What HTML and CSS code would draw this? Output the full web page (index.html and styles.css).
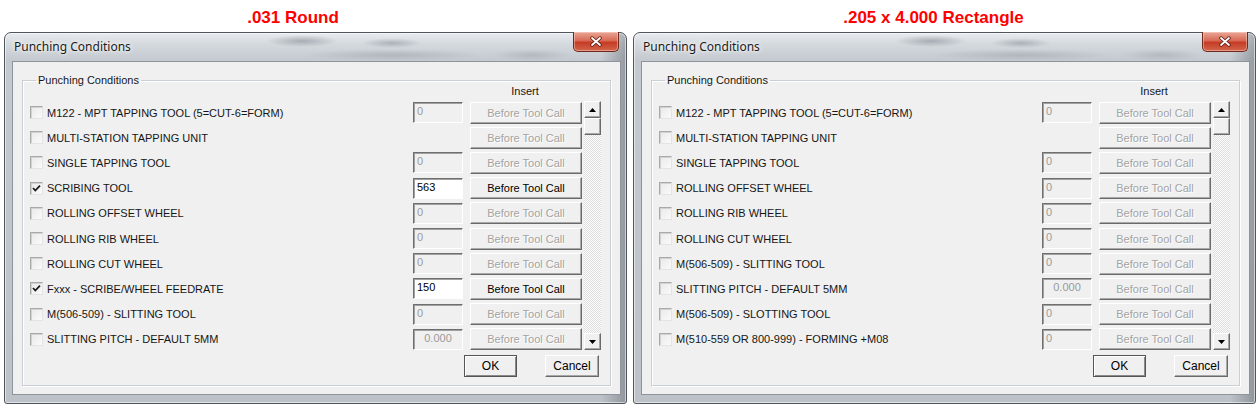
FILE: index.html
```html
<!DOCTYPE html>
<html lang="en">
  <head>
    <meta charset="utf-8" />
    <title>Punching Conditions</title>
    <link rel="stylesheet" href="styles.css">
  </head>
  <body>
    <main class="screens">

      <section class="panel panel-round">
        <h2 class="caption">.031 Round</h2>
        <div class="window">
          <div class="titlebar">
            <span class="title">Punching Conditions</span>
            <span class="close">
              <svg width="14" height="11" viewBox="0 0 14 11"><path d="M3 2 L11 9 M11 2 L3 9" stroke="#5a1a10" stroke-width="3.4" stroke-linecap="round"/><path d="M3 2 L11 9 M11 2 L3 9" stroke="#fff" stroke-width="1.8" stroke-linecap="round"/></svg>
            </span>
          </div>
          <div class="client">
            <fieldset class="group">
              <legend>Punching Conditions</legend>
              <div class="insert-head"><span>Insert</span></div>
              <div class="list">
                <div class="rows">
                  <div class="row">
                    <label class="opt"><span class="box"></span>M122 - MPT TAPPING TOOL (5=CUT-6=FORM)</label>
                    <span class="field">0</span><span class="btn">Before Tool Call</span>
                  </div>
                  <div class="row">
                    <label class="opt"><span class="box"></span>MULTI-STATION TAPPING UNIT</label>
                    <span class="btn">Before Tool Call</span>
                  </div>
                  <div class="row">
                    <label class="opt"><span class="box"></span>SINGLE TAPPING TOOL</label>
                    <span class="field">0</span><span class="btn">Before Tool Call</span>
                  </div>
                  <div class="row">
                    <label class="opt"><span class="box checked"><svg width="11" height="11" viewBox="0 0 11 11"><path d="M2 5 L4.3 7.5 L9 2.6" fill="none" stroke="#1a1a1a" stroke-width="1.8"/></svg></span>SCRIBING TOOL</label>
                    <span class="field on">563</span><span class="btn on">Before Tool Call</span>
                  </div>
                  <div class="row">
                    <label class="opt"><span class="box"></span>ROLLING OFFSET WHEEL</label>
                    <span class="field">0</span><span class="btn">Before Tool Call</span>
                  </div>
                  <div class="row">
                    <label class="opt"><span class="box"></span>ROLLING RIB WHEEL</label>
                    <span class="field">0</span><span class="btn">Before Tool Call</span>
                  </div>
                  <div class="row">
                    <label class="opt"><span class="box"></span>ROLLING CUT WHEEL</label>
                    <span class="field">0</span><span class="btn">Before Tool Call</span>
                  </div>
                  <div class="row">
                    <label class="opt"><span class="box checked"><svg width="11" height="11" viewBox="0 0 11 11"><path d="M2 5 L4.3 7.5 L9 2.6" fill="none" stroke="#1a1a1a" stroke-width="1.8"/></svg></span>Fxxx - SCRIBE/WHEEL FEEDRATE</label>
                    <span class="field on">150</span><span class="btn on">Before Tool Call</span>
                  </div>
                  <div class="row">
                    <label class="opt"><span class="box"></span>M(506-509) - SLITTING TOOL</label>
                    <span class="field">0</span><span class="btn">Before Tool Call</span>
                  </div>
                  <div class="row">
                    <label class="opt"><span class="box"></span>SLITTING PITCH - DEFAULT 5MM</label>
                    <span class="field num">0.000</span><span class="btn">Before Tool Call</span>
                  </div>
                </div>
                <div class="scrollbar">
                  <span class="arrow"><svg width="7" height="4" viewBox="0 0 7 4"><path d="M0 4 L3.5 0 L7 4 Z" fill="#000"/></svg></span>
                  <span class="thumb"></span>
                  <span class="track"></span>
                  <span class="arrow"><svg width="7" height="4" viewBox="0 0 7 4"><path d="M0 0 L7 0 L3.5 4 Z" fill="#000"/></svg></span>
                </div>
              </div>
              <div class="actions">
                <button class="push default">OK</button>
                <button class="push">Cancel</button>
              </div>
            </fieldset>
          </div>
        </div>
      </section>

      <section class="panel panel-rect">
        <h2 class="caption">.205 x 4.000 Rectangle</h2>
        <div class="window">
          <div class="titlebar">
            <span class="title">Punching Conditions</span>
            <span class="close">
              <svg width="14" height="11" viewBox="0 0 14 11"><path d="M3 2 L11 9 M11 2 L3 9" stroke="#5a1a10" stroke-width="3.4" stroke-linecap="round"/><path d="M3 2 L11 9 M11 2 L3 9" stroke="#fff" stroke-width="1.8" stroke-linecap="round"/></svg>
            </span>
          </div>
          <div class="client">
            <fieldset class="group">
              <legend>Punching Conditions</legend>
              <div class="insert-head"><span>Insert</span></div>
              <div class="list">
                <div class="rows">
                  <div class="row">
                    <label class="opt"><span class="box"></span>M122 - MPT TAPPING TOOL (5=CUT-6=FORM)</label>
                    <span class="field">0</span><span class="btn">Before Tool Call</span>
                  </div>
                  <div class="row">
                    <label class="opt"><span class="box"></span>MULTI-STATION TAPPING UNIT</label>
                    <span class="btn">Before Tool Call</span>
                  </div>
                  <div class="row">
                    <label class="opt"><span class="box"></span>SINGLE TAPPING TOOL</label>
                    <span class="field">0</span><span class="btn">Before Tool Call</span>
                  </div>
                  <div class="row">
                    <label class="opt"><span class="box"></span>ROLLING OFFSET WHEEL</label>
                    <span class="field">0</span><span class="btn">Before Tool Call</span>
                  </div>
                  <div class="row">
                    <label class="opt"><span class="box"></span>ROLLING RIB WHEEL</label>
                    <span class="field">0</span><span class="btn">Before Tool Call</span>
                  </div>
                  <div class="row">
                    <label class="opt"><span class="box"></span>ROLLING CUT WHEEL</label>
                    <span class="field">0</span><span class="btn">Before Tool Call</span>
                  </div>
                  <div class="row">
                    <label class="opt"><span class="box"></span>M(506-509) - SLITTING TOOL</label>
                    <span class="field">0</span><span class="btn">Before Tool Call</span>
                  </div>
                  <div class="row">
                    <label class="opt"><span class="box"></span>SLITTING PITCH - DEFAULT 5MM</label>
                    <span class="field num">0.000</span><span class="btn">Before Tool Call</span>
                  </div>
                  <div class="row">
                    <label class="opt"><span class="box"></span>M(506-509) - SLOTTING TOOL</label>
                    <span class="field">0</span><span class="btn">Before Tool Call</span>
                  </div>
                  <div class="row">
                    <label class="opt"><span class="box"></span>M(510-559 OR 800-999) - FORMING +M08</label>
                    <span class="field">0</span><span class="btn">Before Tool Call</span>
                  </div>
                </div>
                <div class="scrollbar">
                  <span class="arrow"><svg width="7" height="4" viewBox="0 0 7 4"><path d="M0 4 L3.5 0 L7 4 Z" fill="#000"/></svg></span>
                  <span class="thumb"></span>
                  <span class="track"></span>
                  <span class="arrow"><svg width="7" height="4" viewBox="0 0 7 4"><path d="M0 0 L7 0 L3.5 4 Z" fill="#000"/></svg></span>
                </div>
              </div>
              <div class="actions">
                <button class="push default">OK</button>
                <button class="push">Cancel</button>
              </div>
            </fieldset>
          </div>
        </div>
      </section>

    </main>
  </body>
</html>
```

FILE: styles.css
```css
* {
  box-sizing: border-box;
}

body {
  margin: 0;
  background: #fff;
  font-family: "Liberation Sans", Arial, sans-serif;
  font-size: 11px;
  color: #161616;
}

.screens {
  display: flex;
  gap: 6px;
  padding-left: 4px;
}

.panel {
  width: 623px;
  display: flex;
  flex-direction: column;
}

.caption {
  margin: 0;
  height: 32px;
  padding-top: 8px;
  font: bold 17px/20px "Liberation Sans", Arial, sans-serif;
  color: #f00;
  text-align: center;
}

.panel-round .caption {
  padding-right: 45px;
}

.panel-rect .caption {
  padding-right: 22px;
}

/* aero-ish window frame */
.window {
  height: 372px;
  display: flex;
  flex-direction: column;
  padding: 0 5px 8px 7px;
  border: 1px solid #4f565d;
  border-radius: 7px 7px 3px 3px;
  background:
    linear-gradient(to right, rgba(255,255,255,0) 96%, rgba(60,66,72,.35) 100%),
    linear-gradient(to bottom, #e8ebee 0, #d3d8dd 12px, #c3c9cf 28px, #bcc2c8 100%);
  box-shadow: inset 0 0 0 1px rgba(255,255,255,.55);
}

.titlebar {
  height: 28px;
  display: flex;
  align-items: center;
  justify-content: space-between;
  background:
    radial-gradient(ellipse 36px 6px at 290px 8px, rgba(70,80,92,.35), rgba(70,80,92,0)),
    radial-gradient(ellipse 30px 5px at 380px 10px, rgba(70,80,92,.3), rgba(70,80,92,0)),
    radial-gradient(ellipse 90px 6px at 380px 22px, rgba(90,98,108,.22), rgba(90,98,108,0)),
    radial-gradient(ellipse 40px 6px at 520px 22px, rgba(90,98,108,.2), rgba(90,98,108,0));
}

.title {
  padding-left: 2px;
  font: 12px/16px "Noto Sans", "Open Sans", sans-serif;
  color: #1a1a1a;
  text-shadow: 0 0 6px #fff, 0 0 3px #fff;
}

.close {
  align-self: flex-start;
  margin-top: -1px;
  margin-right: 2px;
  width: 46px;
  height: 20px;
  display: flex;
  align-items: center;
  justify-content: center;
  border: 1px solid #6e2a20;
  border-top: none;
  border-radius: 0 0 5px 5px;
  background: linear-gradient(to bottom, #e9a898 0, #d86a55 45%, #c63c25 55%, #d2664b 100%);
  box-shadow: inset 0 0 0 1px rgba(255,220,210,.45);
}

.client {
  flex: 1;
  padding: 12px 9px 8px 9px;
  border: 1px solid #8d949b;
  background: #f0f0f0;
}

.group {
  margin: 0;
  height: 312px;
  padding: 0 9px 8px 7px;
  border: 1px solid #c9cfd4;
  box-shadow: inset 1px 1px 0 #fff, 1px 1px 0 #fff;
}

.group legend {
  margin-left: 6px;
  padding: 0 2px;
  line-height: 12px;
}

.insert-head {
  display: flex;
  justify-content: flex-end;
  margin-top: -1px;
  margin-bottom: 3px;
  padding-right: 20px;
  line-height: 12px;
}

.insert-head span {
  width: 112px;
  text-align: center;
}

.list {
  display: flex;
}

.rows {
  flex: 1;
}

.row {
  height: 25.2px;
  display: flex;
  align-items: center;
}

.opt {
  flex: 1;
  display: flex;
  align-items: center;
  gap: 4px;
  white-space: nowrap;
}

.box {
  width: 13px;
  height: 13px;
  display: flex;
  align-items: center;
  justify-content: center;
  border: 1px solid;
  border-color: #a9a9a9 #e4e4e4 #e4e4e4 #a9a9a9;
  background: linear-gradient(135deg, #e9e9e9, #fafafa);
  box-shadow: inset 1px 1px 0 #d2d2d2;
}

.field {
  width: 50px;
  height: 21px;
  margin-right: 7px;
  padding: 2px 0 0 3px;
  line-height: 13px;
  color: #9a9a9a;
  border: 1px solid;
  border-color: #6f6f6f #fff #fff #6f6f6f;
  background: #f0f0f0;
  box-shadow: inset 1px 1px 0 #a0a0a0;
}

.field.on {
  color: #000;
  background: #fff;
}

.field.num {
  padding-left: 0;
  text-align: center;
}

.btn {
  width: 112px;
  height: 22px;
  line-height: 20px;
  text-align: center;
  color: #a3a3a3;
  text-shadow: 1px 1px 0 #fff;
  border: 1px solid;
  border-color: #fff #6a6a6a #6a6a6a #fff;
  background: #f0f0f0;
  box-shadow: inset -1px -1px 0 #a8a8a8;
}

.btn.on {
  color: #000;
  text-shadow: none;
}

.scrollbar {
  width: 17px;
  height: 249px;
  margin: 1px 0 0 2px;
  display: flex;
  flex-direction: column;
}

.arrow,
.thumb {
  height: 17px;
  display: flex;
  align-items: center;
  justify-content: center;
  border: 1px solid;
  border-color: #fff #6a6a6a #6a6a6a #fff;
  background: #f0f0f0;
  box-shadow: inset -1px -1px 0 #a8a8a8;
}

.track {
  flex: 1;
  background: repeating-conic-gradient(#dedede 0 25%, #fbfbfb 0 50%) 0 0 / 2px 2px;
}

.actions {
  display: flex;
  justify-content: flex-end;
  gap: 28px;
  margin-top: 3px;
  padding-right: 2px;
}

.push {
  width: 54px;
  height: 22px;
  padding: 0;
  font: 12px "Liberation Sans", Arial, sans-serif;
  color: #000;
  border: 1px solid;
  border-color: #fff #6a6a6a #6a6a6a #fff;
  border-radius: 0;
  background: #f0f0f0;
  box-shadow: inset -1px -1px 0 #a8a8a8;
}

.push.default {
  width: 53px;
  border-color: #555;
  box-shadow: inset 1px 1px 0 #fff, inset -1px -1px 0 #8a8a8a;
}
```
